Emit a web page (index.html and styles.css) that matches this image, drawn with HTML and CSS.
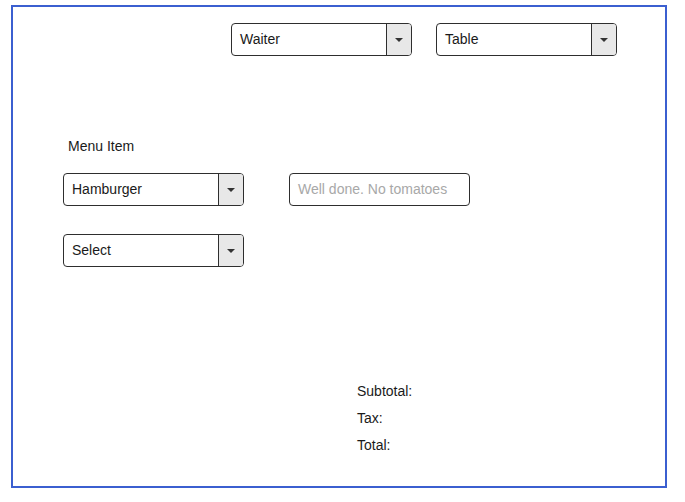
FILE: index.html
```html
<!DOCTYPE html>
<html>
<head>
<meta charset="utf-8">
<link rel="stylesheet" href="styles.css">
</head>
<body>
<div class="frame">
  <div class="top-row">
    <div class="dropdown"><span class="value">Waiter</span><span class="arrow"></span></div>
    <div class="dropdown"><span class="value">Table</span><span class="arrow"></span></div>
  </div>
  <div class="menu-section">
    <div class="label">Menu Item</div>
    <div class="item-row">
      <div class="dropdown"><span class="value">Hamburger</span><span class="arrow"></span></div>
      <div class="textbox">Well done. No tomatoes</div>
    </div>
    <div class="dropdown select-row"><span class="value">Select</span><span class="arrow"></span></div>
  </div>
  <div class="totals">
    <div class="total-line">Subtotal:</div>
    <div class="total-line">Tax:</div>
    <div class="total-line">Total:</div>
  </div>
</div>
</body>
</html>
```

FILE: styles.css
```css
html, body {
  margin: 0;
  padding: 0;
  background: #ffffff;
}
body {
  font-family: "Liberation Sans", Arial, sans-serif;
  color: #1a1a1a;
}
.frame {
  box-sizing: border-box;
  width: 656px;
  height: 483px;
  margin: 5px 0 0 11px;
  border: 2px solid #3b5fd0;
  display: flex;
  flex-direction: column;
}
.top-row {
  display: flex;
  gap: 24px;
  padding: 16px 0 0 218px;
}
.dropdown {
  box-sizing: border-box;
  width: 181px;
  height: 33px;
  border: 1px solid #2e2e2e;
  border-radius: 4px;
  display: flex;
  overflow: hidden;
  background: #fff;
}
.dropdown .value {
  flex: 1;
  display: flex;
  align-items: center;
  padding-left: 8px;
  padding-bottom: 1px;
  font-size: 14px;
  color: #1a1a1a;
}
.dropdown .arrow {
  width: 24px;
  border-left: 1px solid #2e2e2e;
  background: #e8e8e8;
  display: flex;
  align-items: center;
  justify-content: center;
}
.dropdown .arrow::after {
  content: "";
  width: 0;
  height: 0;
  border-left: 4px solid transparent;
  border-right: 4px solid transparent;
  border-top: 4px solid #333;
}
.menu-section {
  padding: 82px 0 0 50px;
  display: flex;
  flex-direction: column;
}
.label {
  font-size: 14px;
  line-height: 16px;
  padding-left: 5px;
  height: 16px;
}
.item-row {
  display: flex;
  gap: 45px;
  margin-top: 19px;
}
.textbox {
  box-sizing: border-box;
  width: 181px;
  height: 33px;
  border: 1px solid #2e2e2e;
  border-radius: 4px;
  display: flex;
  align-items: center;
  padding-left: 8px;
  padding-bottom: 1px;
  font-size: 14px;
  color: #a8a8a8;
}
.select-row {
  margin-top: 28px;
}
.totals {
  padding: 116px 0 0 344px;
  display: flex;
  flex-direction: column;
  gap: 11px;
}
.total-line {
  font-size: 14px;
  line-height: 16px;
}
```
